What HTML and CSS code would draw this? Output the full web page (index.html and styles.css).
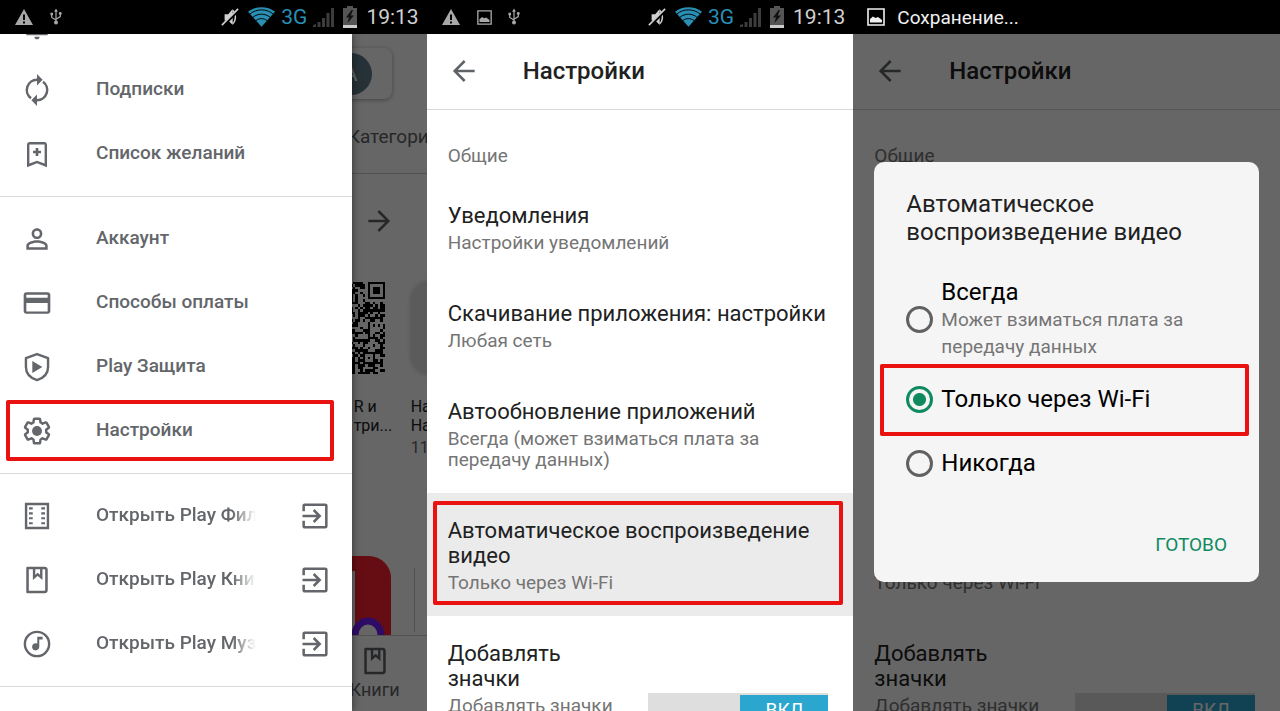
FILE: index.html
```html
<!DOCTYPE html>
<html lang="ru">
<head>
  <meta charset="UTF-8" />
  <meta name="viewport" content="width=device-width, initial-scale=1" />
  <title>Настройки Google Play</title>
  <link rel="stylesheet" href="styles.css">
</head>
<body>

  <!-- Общие иконки -->
  <svg class="sprite" aria-hidden="true">
    <symbol id="i-warning" viewBox="0 0 20 20"><path fill="currentColor" fill-rule="evenodd" d="M10 2L1 18h18zM9 7.500h2V13H9zM9 14.500h2v2H9z"/></symbol>
    <symbol id="i-usb" viewBox="0 0 14 20">
      <path d="M7 3v13M2 7v3.500l5 3M12 6v3.500l-5 3" fill="none" stroke="currentColor" stroke-width="1.400"/>
      <path fill="currentColor" d="M7 0l2.200 4H4.800zM.5 5h3v3h-3z"/><circle cx="12" cy="6" r="1.700" fill="currentColor"/><circle cx="7" cy="16.500" r="2.300" fill="currentColor"/>
    </symbol>
    <symbol id="i-picture" viewBox="0 0 18 18">
      <path fill="none" stroke="currentColor" stroke-width="1.600" d="M1 1h16v16H1z"/><path fill="currentColor" d="M3 14.500V11l3-2.500 2.500 1.500L11 9l4 3v2.500z"/>
    </symbol>
    <symbol id="i-mute" viewBox="0 0 20 22">
      <path fill="currentColor" d="M4 8h4l5-6v18l-5-5H4z"/><path d="M13 3.500c4 3.500 4 11.500 0 15" fill="none" stroke="currentColor" stroke-width="1.600"/>
      <path d="M2 21L20 3" stroke="#000" stroke-width="3"/><path d="M1 20L19 2" stroke="currentColor" stroke-width="1.800"/>
    </symbol>
    <symbol id="i-wifi" viewBox="0 0 28 20">
      <path fill="currentColor" d="M14 20L0 4.500C8-1.500 20-1.500 28 4.500z"/>
      <path d="M2 6.800c7-5.600 17-5.600 24 0M5 10.300c5.500-4.300 12.500-4.300 18 0M8.200 13.700c3.500-2.700 8.100-2.700 11.600 0" fill="none" stroke="#000" stroke-width="1"/>
    </symbol>
    <symbol id="i-signal" viewBox="0 0 21 20"><path fill="currentColor" d="M0 20v-2l3-1v3zM4.500 20v-5h3v5zM9 20v-9h3v9zM13.500 20V6h3v14zM18 20V1h3v19z"/></symbol>
    <symbol id="i-battery" viewBox="0 0 14 22">
      <path fill="#555" d="M4 0h6v2h4v20H0V2h4z"/><path fill="#ccc" d="M0 19h14v3H0z"/><path fill="#111" d="M8.500 4L3 11.500h3L4.500 17 11 9.500H7.800L10 4z"/>
    </symbol>
    <symbol id="i-back" viewBox="0 0 24 24"><path d="M20 12H5M12.500 4.500L5 12l7.500 7.500" fill="none" stroke="currentColor" stroke-width="1.900"/></symbol>
    <symbol id="i-bell" viewBox="0 0 24 24"><path fill="currentColor" d="M12 22c1.100 0 2-.9 2-2h-4c0 1.100.9 2 2 2zm6-6v-5c0-3.070-1.640-5.640-4.500-6.320V4a1.500 1.500 0 00-3 0v.68C7.630 5.360 6 7.920 6 11v5l-2 1v2h16v-2z"/></symbol>
    <symbol id="i-renew" viewBox="0 0 24 24"><path d="M16.500 5.800A7.700 7.700 0 0112 19.700M7.500 18.200A7.700 7.700 0 0112 4.300" fill="none" stroke="currentColor" stroke-width="1.900"/><path fill="currentColor" d="M12 0l4.200 4.300L12 8.600zM12 24l-4.200-4.300L12 15.400z"/></symbol>
    <symbol id="i-wish" viewBox="0 0 24 24"><path fill="currentColor" d="M17.500 3h-11C5.400 3 4.500 3.900 4.500 5v17l7.500-3 7.500 3V5c0-1.100-.9-2-2-2zm.2 16.200L12 17l-5.700 2.200V4.800h11.400v14.400zM11 7.500h2v2h2v2h-2v2h-2v-2H9v-2h2z"/></symbol>
    <symbol id="i-person" viewBox="0 0 24 24"><path fill="currentColor" d="M12 5.900a2.100 2.100 0 110 4.200 2.100 2.100 0 010-4.200m0 9c2.970 0 6.100 1.460 6.100 2.100v1.100H5.900V17c0-.64 3.130-2.100 6.100-2.100M12 4C9.790 4 8 5.790 8 8s1.790 4 4 4 4-1.790 4-4-1.790-4-4-4zm0 9c-2.670 0-8 1.340-8 4v3h16v-3c0-2.660-5.330-4-8-4z"/></symbol>
    <symbol id="i-card" viewBox="0 0 24 24"><path fill="currentColor" d="M20 4H4c-1.110 0-2 .89-2 2v12c0 1.110.89 2 2 2h16c1.110 0 2-.89 2-2V6c0-1.110-.89-2-2-2zm0 14.300H4V12h16v6.300zm0-10.300H4V5.800h16V8z"/></symbol>
    <symbol id="i-shield" viewBox="0 0 24 24"><path d="M12 2.300l8.300 3V12c0 5-3.300 8.300-8.300 9.800C7 20.300 3.700 17 3.700 12V5.300z" fill="none" stroke="currentColor" stroke-width="1.800" stroke-linejoin="round"/><path fill="currentColor" d="M8.500 7.500v9l7.500-4.500z"/></symbol>
    <symbol id="i-gear" viewBox="-1 -1 26 26"><path fill="none" stroke="currentColor" stroke-width="2" stroke-linejoin="round" d="M19.430 12.980c.04-.32.07-.64.07-.98 0-.34-.03-.66-.07-.98l2.110-1.650c.19-.15.24-.42.12-.64l-2-3.460c-.09-.16-.26-.25-.44-.25-.06 0-.12.010-.17.030l-2.490 1c-.52-.4-1.080-.73-1.690-.98l-.38-2.650C14.460 2.180 14.250 2 14 2h-4c-.25 0-.46.18-.49.42l-.38 2.650c-.61.25-1.170.59-1.690.98l-2.490-1c-.06-.02-.12-.03-.18-.03-.17 0-.34.09-.43.25l-2 3.460c-.13.22-.07.49.12.64l2.110 1.650c-.04.32-.07.65-.07.98 0 .33.030.66.070.98l-2.110 1.650c-.19.15-.24.42-.12.64l2 3.460c.09.16.26.25.44.25.06 0 .12-.01.17-.03l2.490-1c.52.4 1.080.73 1.690.98l.38 2.650c.03.24.24.42.49.42h4c.25 0 .46-.18.49-.42l.38-2.650c.61-.25 1.170-.59 1.690-.98l2.490 1c.06.02.12.03.18.03.17 0 .34-.09.43-.25l2-3.460c.12-.22.07-.49-.12-.64z"/><circle cx="12" cy="12" r="4" fill="currentColor"/></symbol>
    <symbol id="i-film" viewBox="0 0 24 24"><path d="M3.800 3h16.400v18H3.800z" fill="none" stroke="currentColor" stroke-width="1.800"/><path fill="currentColor" d="M6 5.500h2.800v1.600H6zM6 9.200h2.800v1.600H6zM6 12.900h2.800v1.600H6zM6 16.600h2.800v1.600H6zM15.200 5.500H18v1.600h-2.800zM15.200 9.200H18v1.600h-2.800zM15.200 12.900H18v1.600h-2.800zM15.200 16.600H18v1.600h-2.800z"/></symbol>
    <symbol id="i-book" viewBox="0 0 24 24"><path d="M4.900 3h12.700A1.500 1.500 0 0119.100 4.500v15a1.500 1.500 0 01-1.500 1.500H4.900z" fill="none" stroke="currentColor" stroke-width="1.900" stroke-linejoin="round"/><path d="M9.800 3v7l2.700-2.300 2.700 2.300V3" fill="none" stroke="currentColor" stroke-width="1.800"/></symbol>
    <symbol id="i-music" viewBox="0 0 24 24"><circle cx="12" cy="12" r="9.100" fill="none" stroke="currentColor" stroke-width="1.800"/><path fill="currentColor" d="M12.200 6.500h4v2.200h-2.500v5.500a2.700 2.700 0 11-1.500-2.500z"/></symbol>
    <symbol id="i-open" viewBox="0 0 24 24"><path d="M3.500 8.500V4.300a.8.800 0 01.8-.8h15.400a.8.800 0 01.8.8v15.400a.8.800 0 01-.8.800H4.300a.8.800 0 01-.8-.8v-4.200" fill="none" stroke="currentColor" stroke-width="1.900"/><path d="M2.600 12h12.400M11 7.500l4.500 4.500-4.500 4.500" fill="none" stroke="currentColor" stroke-width="1.900"/></symbol>
  </svg>

  <!-- Экран 1: боковое меню -->
  <section class="phone">
    <header class="status">
      <svg class="s-warning"><use href="#i-warning"/></svg>
      <svg class="s-usb"><use href="#i-usb"/></svg>
      <span class="status-right">
        <svg class="s-mute"><use href="#i-mute"/></svg>
        <svg class="s-wifi"><use href="#i-wifi"/></svg>
        <span class="net">3G</span>
        <svg class="s-signal"><use href="#i-signal"/></svg>
        <svg class="s-battery"><use href="#i-battery"/></svg>
        <time>19:13</time>
      </span>
    </header>
    <div class="screen">
      <div class="store">
        <div class="search-card"><span class="avatar">A</span></div>
        <div class="tabs"><span>Категории</span></div>
        <div class="section-head"><svg class="icon flip"><use href="#i-back"/></svg></div>
        <div class="apps">
          <div class="app">
            <svg class="app-tile" viewBox="0 0 37 37" shape-rendering="crispEdges"><path id="qr" fill="#000"/></svg>
            <p class="app-name cut">R и<br>три...</p>
          </div>
          <div class="app">
            <div class="app-tile grey"></div>
            <p class="app-name">На<br>На</p>
            <p class="app-price">11</p>
          </div>
        </div>
        <div class="banner">
          <svg class="banner-tile" viewBox="0 0 104 104">
            <rect width="104" height="104" rx="22" fill="#ff2230"/>
            <path fill="#fff" d="M0 15h68v60H0z"/>
            <path d="M68 79a13 14 0 0126 0" fill="#fff" stroke="#7420ff" stroke-width="7"/>
          </svg>
          <span class="banner-line"></span>
        </div>
        <nav class="bottom-nav">
          <a href="#books" class="nav-item"><svg class="icon"><use href="#i-book"/></svg>Книги</a>
        </nav>
      </div>
      <div class="scrim"></div>
      <nav class="drawer">
        <div class="group scrolled">
          <a href="#notifications" class="drawer-item"><svg class="icon"><use href="#i-bell"/></svg><span>Уведомления</span></a>
          <a href="#subscriptions" class="drawer-item"><svg class="icon"><use href="#i-renew"/></svg><span>Подписки</span></a>
          <a href="#wishlist" class="drawer-item"><svg class="icon"><use href="#i-wish"/></svg><span>Список желаний</span></a>
        </div>
        <div class="group">
          <a href="#account" class="drawer-item"><svg class="icon"><use href="#i-person"/></svg><span>Аккаунт</span></a>
          <a href="#payment" class="drawer-item"><svg class="icon"><use href="#i-card"/></svg><span>Способы оплаты</span></a>
          <a href="#protect" class="drawer-item"><svg class="icon"><use href="#i-shield"/></svg><span>Play Защита</span></a>
          <a href="#settings" class="drawer-item marked"><svg class="icon"><use href="#i-gear"/></svg><span>Настройки</span></a>
        </div>
        <div class="group">
          <a href="#movies" class="drawer-item"><svg class="icon"><use href="#i-film"/></svg><span class="fade">Открыть Play Фильмы</span><svg class="icon"><use href="#i-open"/></svg></a>
          <a href="#play-books" class="drawer-item"><svg class="icon"><use href="#i-book"/></svg><span class="fade">Открыть Play Книги</span><svg class="icon"><use href="#i-open"/></svg></a>
          <a href="#music" class="drawer-item"><svg class="icon"><use href="#i-music"/></svg><span class="fade">Открыть Play Музыку</span><svg class="icon"><use href="#i-open"/></svg></a>
        </div>
      </nav>
    </div>
  </section>

  <!-- Экран 2: настройки -->
  <section class="phone">
    <header class="status">
      <svg class="s-warning"><use href="#i-warning"/></svg>
      <svg class="s-picture"><use href="#i-picture"/></svg>
      <svg class="s-usb"><use href="#i-usb"/></svg>
      <span class="status-right">
        <svg class="s-mute"><use href="#i-mute"/></svg>
        <svg class="s-wifi"><use href="#i-wifi"/></svg>
        <span class="net">3G</span>
        <svg class="s-signal"><use href="#i-signal"/></svg>
        <svg class="s-battery"><use href="#i-battery"/></svg>
        <time>19:13</time>
      </span>
    </header>
    <div class="screen">
      <div class="app-bar">
        <button class="back" aria-label="Назад"><svg class="icon"><use href="#i-back"/></svg></button>
        <h1>Настройки</h1>
      </div>
      <h2 class="category">Общие</h2>
      <ul class="prefs">
        <li class="pref"><h3>Уведомления</h3><p>Настройки уведомлений</p></li>
        <li class="pref"><h3>Скачивание приложения: настройки</h3><p>Любая сеть</p></li>
        <li class="pref"><h3>Автообновление приложений</h3><p>Всегда (может взиматься плата за передачу данных)</p></li>
        <li class="pref pressed marked"><h3>Автоматическое воспроизведение видео</h3><p>Только через Wi-Fi</p></li>
        <li class="pref with-switch">
          <div class="pref-text"><h3>Добавлять значки</h3><p>Добавлять значки на главный экран для новых приложений</p></div>
          <label class="switch"><input type="checkbox" aria-label="Добавлять значки" checked><span>ВКЛ</span></label>
        </li>
      </ul>
    </div>
  </section>

  <!-- Экран 3: диалог выбора -->
  <section class="phone">
    <header class="status saving">
      <svg class="s-picture"><use href="#i-picture"/></svg>
      <span>Сохранение...</span>
    </header>
    <div class="screen">
      <div class="app-bar">
        <button class="back" aria-label="Назад"><svg class="icon"><use href="#i-back"/></svg></button>
        <h1>Настройки</h1>
      </div>
      <h2 class="category">Общие</h2>
      <ul class="prefs">
        <li class="pref"><h3>Уведомления</h3><p>Настройки уведомлений</p></li>
        <li class="pref"><h3>Скачивание приложения: настройки</h3><p>Любая сеть</p></li>
        <li class="pref"><h3>Автообновление приложений</h3><p>Всегда (может взиматься плата за передачу данных)</p></li>
        <li class="pref"><h3>Автоматическое воспроизведение видео</h3><p>Только через Wi-Fi</p></li>
        <li class="pref with-switch">
          <div class="pref-text"><h3>Добавлять значки</h3><p>Добавлять значки на главный экран для новых приложений</p></div>
          <label class="switch"><input type="checkbox" aria-label="Добавлять значки" checked><span>ВКЛ</span></label>
        </li>
      </ul>
      <div class="scrim">
        <form class="dialog">
          <h2>Автоматическое воспроизведение видео</h2>
          <div class="options">
            <label class="option">
              <input type="radio" name="autoplay">
              <span>Всегда<small>Может взиматься плата за передачу данных</small></span>
            </label>
            <label class="option marked">
              <input type="radio" name="autoplay" checked>
              <span>Только через Wi-Fi</span>
            </label>
            <label class="option">
              <input type="radio" name="autoplay">
              <span>Никогда</span>
            </label>
          </div>
          <button type="button" class="done">ГОТОВО</button>
        </form>
      </div>
    </div>
  </section>

  <script>
    // Узор QR-кода на плитке приложения
    const size = 37;
    let seed = 11;
    let d = "";

    function box(x, y, w, h) {
      return `M${x} ${y}h${w}v${h}h${-w}z`;
    }

    for (let y = 0; y < size; y++) {
      for (let x = 0; x < size; x++) {
        seed = (seed * 16807) % 2147483647;
        const inFinder = x > 28 && y < 8;
        const inAlign = x > 27 && x < 33 && y > 27 && y < 33;
        if (!inFinder && !inAlign && seed % 100 < 54) d += box(x, y, 1, 1);
      }
    }
    // угловой и выравнивающий маркеры
    d += box(30, 0, 7, 1) + box(30, 6, 7, 1) + box(30, 1, 1, 5) + box(36, 1, 1, 5) + box(32, 2, 3, 3);
    d += box(28, 28, 5, 1) + box(28, 32, 5, 1) + box(28, 29, 1, 3) + box(32, 29, 1, 3) + box(30, 30, 1, 1);
    document.getElementById("qr").setAttribute("d", d);
  </script>
</body>
</html>
```
FILE: styles.css
```css
* {
  box-sizing: border-box;
}

body {
  margin: 0;
  height: 100vh;
  display: flex;
  overflow: hidden;
  background: #fff;
  color: #212121;
  font-family: Roboto, "Noto Sans", sans-serif;
}

h1, h2, h3, p, ul {
  margin: 0;
  padding: 0;
  font-weight: 400;
  list-style: none;
}

a {
  color: inherit;
  text-decoration: none;
}

button {
  border: none;
  background: none;
  padding: 0;
  font: inherit;
  color: inherit;
  cursor: pointer;
}

svg {
  display: block;
  flex: none;
}

.sprite {
  position: absolute;
  width: 0;
  height: 0;
}

.icon {
  width: 32px;
  height: 32px;
}

.flip {
  transform: scaleX(-1);
}

.phone {
  flex: 1;
  min-width: 0;
  display: flex;
  flex-direction: column;
}

/* Строка состояния */
.status {
  height: 34px;
  flex: none;
  display: flex;
  align-items: center;
  gap: 16px;
  padding: 0 8px 0 14px;
  background: #000;
  color: #a8a8a8;
}

.status-right {
  margin-left: auto;
  display: flex;
  align-items: center;
  gap: 9px;
  color: #d0d0d0;
}

.s-warning { width: 20px; height: 20px; }
.s-usb { width: 12px; height: 18px; }
.s-picture { width: 15px; height: 15px; }
.s-mute { width: 18px; height: 20px; }
.s-wifi { width: 27px; height: 20px; color: #2a8fb5; }
.s-signal { width: 21px; height: 20px; color: #3c3c3c; }
.s-battery { width: 14px; height: 22px; }

.net {
  font-size: 21px;
  line-height: 32px;
  color: #2a8fb5;
  margin: 0 -3px;
}

.status time {
  font-size: 21px;
}

.saving {
  gap: 12px;
  color: #f0f0f0;
  font-size: 19px;
}

.saving .s-picture {
  width: 18px;
  height: 18px;
}

.screen {
  flex: 1;
  min-height: 0;
  position: relative;
  overflow: hidden;
}

.scrim {
  position: absolute;
  inset: 0;
  display: flex;
  align-items: center;
  padding: 0 21px 2px;
  background: rgba(0, 0, 0, 0.6);
}

/* Красная рамка вокруг нужного пункта */
.marked {
  position: relative;
}

.marked::after {
  content: "";
  position: absolute;
  inset: 1px 18px 2px 6px;
  border: 4px solid #ea1111;
  border-radius: 2px;
}

/* Магазин под меню */
.store {
  height: 100%;
  display: flex;
  flex-direction: column;
  overflow: hidden;
}

.search-card {
  flex: none;
  height: 51px;
  margin: 14px 35px 0 12px;
  padding-right: 20px;
  display: flex;
  align-items: center;
  justify-content: flex-end;
  border-radius: 8px;
  box-shadow: 0 1px 4px rgba(0, 0, 0, 0.35);
}

.avatar {
  width: 42px;
  height: 42px;
  border-radius: 50%;
  background: #607d8b;
  color: #fff;
  font-size: 21px;
  line-height: 42px;
  text-align: center;
}

.tabs {
  flex: none;
  height: 75px;
  padding: 27px 0 0 calc(100% - 79px);
  border-bottom: 1px solid #ccc;
  color: #5f6368;
  font-size: 19px;
  line-height: 22px;
}

.section-head {
  flex: none;
  height: 94px;
  padding-right: 32px;
  display: flex;
  align-items: center;
  justify-content: flex-end;
  color: #5f6368;
}

.apps {
  flex: none;
  height: 288px;
  margin-left: calc(100% - 134px);
  padding-top: 14px;
  display: flex;
  gap: 26px;
}

.app {
  flex: none;
  width: 92px;
}

.app-tile {
  width: 92px;
  height: 92px;
  margin-bottom: 23px;
}

.grey {
  border-radius: 18px;
  background: #e4e4e4;
  box-shadow: 0 0 5px rgba(0, 0, 0, 0.2);
}

.app-name,
.app-price {
  font-size: 16px;
  line-height: 19px;
  white-space: nowrap;
}

.cut {
  padding-left: 61px;
}

.app-price {
  margin-top: 3px;
  color: #5f6368;
}

.banner {
  flex: 1;
  min-height: 0;
  display: flex;
  justify-content: flex-end;
  gap: 23px;
  padding-right: 12px;
  overflow: hidden;
}

.banner-tile {
  width: 104px;
  height: 104px;
}

.banner-line {
  width: 1px;
  margin: 12px 0 3px;
  background: #ccc;
}

.bottom-nav {
  flex: none;
  height: 76px;
  padding: 9px 27px 0 0;
  display: flex;
  justify-content: flex-end;
  border-top: 1px solid #ccc;
  color: #5f6368;
}

.nav-item {
  display: flex;
  flex-direction: column;
  align-items: center;
  gap: 2px;
  font-size: 18px;
}

/* Боковое меню */
.drawer {
  position: absolute;
  inset: 0 auto 0 0;
  width: calc(100% - 75px);
  background: #fff;
  color: #63666a;
  box-shadow: 0 0 8px rgba(0, 0, 0, 0.5);
  overflow: hidden;
}

.group {
  padding: 10px 0;
  border-bottom: 1px solid #dadada;
}

.scrolled {
  margin-top: -50px;
}

.drawer-item {
  height: 64px;
  padding: 0 21px;
  display: flex;
  align-items: center;
  gap: 43px;
  font-size: 19px;
  font-weight: 500;
  white-space: nowrap;
}

.drawer-item span {
  padding-bottom: 3px;
}

.fade {
  flex: 1;
  min-width: 0;
  overflow: hidden;
  mask-image: linear-gradient(to left, transparent, #000 24px);
}

/* Настройки */
.app-bar {
  height: 76px;
  padding: 0 21px 2px;
  display: flex;
  align-items: center;
  gap: 43px;
  border-bottom: 1px solid #d8d8d8;
}

.app-bar h1 {
  font-size: 24px;
  font-weight: 500;
}

.back {
  color: #5f6368;
}

.category {
  padding: 35px 21px 11px;
  color: #757575;
  font-size: 19px;
  line-height: 22px;
}

.pref {
  padding: 25px 21px 23px;
}

.pref h3 {
  font-size: 22px;
  line-height: 25px;
}

.pref p {
  margin-top: 4px;
  color: #757575;
  font-size: 19px;
  line-height: 21px;
}

.pressed {
  background: #ebebeb;
}

.pressed::after {
  inset: 8px 10px 11px 6px;
}

.with-switch {
  display: flex;
  align-items: center;
  justify-content: space-between;
  padding-right: 25px;
}

.pref-text {
  width: 172px;
}

.switch {
  width: 180px;
  height: 34px;
  padding: 2px 0;
  display: flex;
  justify-content: flex-end;
  position: relative;
  background: #dedede;
}

.switch input {
  position: absolute;
  inset: 0;
  margin: 0;
  opacity: 0;
}

.switch span {
  width: 88px;
  background: #2ba6cf;
  color: #fff;
  font-size: 19px;
  line-height: 30px;
  text-align: center;
}

/* Диалог */
.dialog {
  width: 100%;
  padding: 28px 0 25px;
  display: flex;
  flex-direction: column;
  background: #f5f5f5;
  border-radius: 10px;
}

.dialog h2 {
  padding: 0 32px;
  font-size: 24px;
  line-height: 28px;
}

.options {
  padding: 25px 0 38px;
}

.option {
  min-height: 64px;
  padding: 8px 32px 7px;
  display: flex;
  align-items: center;
  gap: 8px;
  color: #000;
  font-size: 24px;
  line-height: 27px;
}

.option input {
  appearance: none;
  flex: none;
  width: 27px;
  height: 27px;
  margin: 0;
  border: 3px solid #616161;
  border-radius: 50%;
}

.option input:checked {
  border-color: #0f8a5f;
  background: radial-gradient(circle, #0f8a5f 6px, transparent 7px);
}

.option small {
  display: block;
  color: #757575;
  font-size: 19px;
}

.option.marked::after {
  inset: -3px 10px -5px 6px;
}

.done {
  align-self: flex-end;
  margin-right: 32px;
  color: #0f8a5f;
  font-size: 19px;
  line-height: 24px;
}
```
